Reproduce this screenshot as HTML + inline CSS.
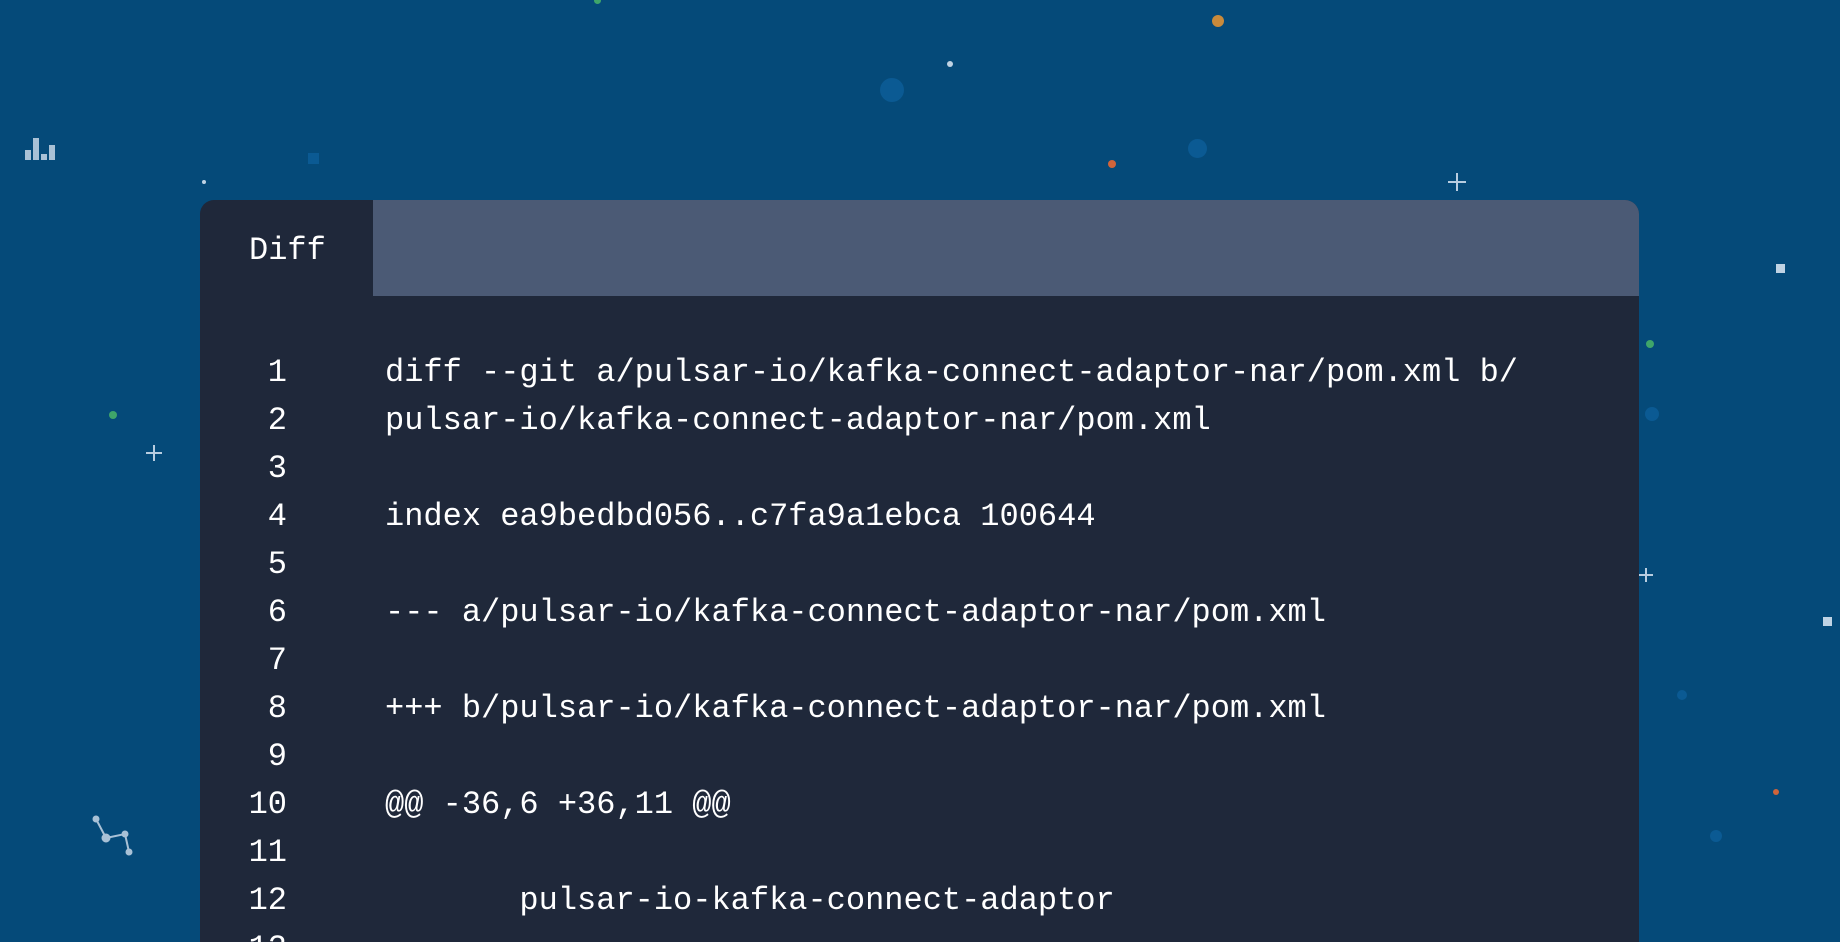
<!DOCTYPE html>
<html><head><meta charset="utf-8"><style>
html,body{margin:0;padding:0;width:1840px;height:942px;overflow:hidden;}
body{background:#054a79;position:relative;font-family:"Liberation Mono",monospace;}
.a{position:absolute}
.dot{position:absolute;border-radius:50%}
.card{position:absolute;left:200px;top:200px;width:1439px;height:742px;background:#1f283a;border-radius:14px 14px 0 0;overflow:hidden}
.hdr{position:absolute;left:173px;top:0;right:0;height:96px;background:#4b5a75}
.t{position:absolute;font-size:32px;line-height:48px;color:#fff;white-space:pre}
.n{position:absolute;width:87px;text-align:right;font-size:32px;line-height:48px;color:#fff}
</style></head><body>
<div class="dot" style="left:594px;top:-3px;width:7px;height:7px;background:#3fa56a"></div>
<div class="dot" style="left:1212px;top:15px;width:12px;height:12px;background:#c98a3b"></div>
<div class="dot" style="left:947px;top:61px;width:6px;height:6px;background:#c0d3e4"></div>
<div class="dot" style="left:880px;top:78px;width:24px;height:24px;background:#0b5a93"></div>
<div class="a" style="left:308px;top:153px;width:11px;height:11px;background:#0b5a93"></div>
<div class="dot" style="left:202px;top:180px;width:4px;height:4px;background:#c0d3e4"></div>
<div class="dot" style="left:1108px;top:160px;width:8px;height:8px;background:#d0643a"></div>
<div class="dot" style="left:1188px;top:139px;width:19px;height:19px;background:#0b5a93"></div>
<svg class="a" style="left:1447px;top:172px" width="20" height="20"><path d="M10 1V19M1 10H19" stroke="#b8cde0" stroke-width="2"/></svg>
<div class="a" style="left:1776px;top:264px;width:9px;height:9px;background:#c0d3e4"></div>
<div class="dot" style="left:1646px;top:340px;width:8px;height:8px;background:#3fa56a"></div>
<div class="dot" style="left:1645px;top:407px;width:14px;height:14px;background:#0b5a93"></div>
<div class="dot" style="left:109px;top:411px;width:8px;height:8px;background:#3fa56a"></div>
<svg class="a" style="left:145px;top:444px" width="18" height="18"><path d="M9 1V17M1 9H17" stroke="#b8cde0" stroke-width="2"/></svg>
<svg class="a" style="left:1638px;top:567px" width="16" height="16"><path d="M8 1V15M1 8H15" stroke="#b8cde0" stroke-width="2"/></svg>
<div class="a" style="left:1823px;top:617px;width:9px;height:9px;background:#c0d3e4"></div>
<div class="dot" style="left:1677px;top:690px;width:10px;height:10px;background:#0b5a93"></div>
<div class="dot" style="left:1773px;top:789px;width:6px;height:6px;background:#d0643a"></div>
<div class="dot" style="left:1710px;top:830px;width:12px;height:12px;background:#0b5a93"></div>
<svg class="a" style="left:0;top:0" width="200" height="942">
<g fill="#a9c1d6"><rect x="25" y="150" width="6" height="10"/><rect x="33" y="138" width="6" height="22"/><rect x="41" y="154" width="6" height="6"/><rect x="49" y="145" width="6" height="15"/></g>
<g stroke="#a9c1d6" stroke-width="2" fill="#a9c1d6"><path d="M96 819L106 838L125 834L129 852" fill="none"/><circle cx="96" cy="819" r="2.5"/><circle cx="106" cy="838" r="3.5"/><circle cx="125" cy="834" r="2.5"/><circle cx="129" cy="852" r="2.5"/></g>
</svg>
<div class="card">
<div class="hdr"></div>
<div class="t" style="left:49px;top:27px">Diff</div>
<div class="n" style="top:149px">1</div><div class="t" style="left:185px;top:149px">diff --git a/pulsar-io/kafka-connect-adaptor-nar/pom.xml b/</div>
<div class="n" style="top:197px">2</div><div class="t" style="left:185px;top:197px">pulsar-io/kafka-connect-adaptor-nar/pom.xml</div>
<div class="n" style="top:245px">3</div>
<div class="n" style="top:293px">4</div><div class="t" style="left:185px;top:293px">index ea9bedbd056..c7fa9a1ebca 100644</div>
<div class="n" style="top:341px">5</div>
<div class="n" style="top:389px">6</div><div class="t" style="left:185px;top:389px">--- a/pulsar-io/kafka-connect-adaptor-nar/pom.xml</div>
<div class="n" style="top:437px">7</div>
<div class="n" style="top:485px">8</div><div class="t" style="left:185px;top:485px">+++ b/pulsar-io/kafka-connect-adaptor-nar/pom.xml</div>
<div class="n" style="top:533px">9</div>
<div class="n" style="top:581px">10</div><div class="t" style="left:185px;top:581px">@@ -36,6 +36,11 @@</div>
<div class="n" style="top:629px">11</div>
<div class="n" style="top:677px">12</div><div class="t" style="left:185px;top:677px">       pulsar-io-kafka-connect-adaptor</div>
<div class="n" style="top:725px">13</div>
</div>
</body></html>
